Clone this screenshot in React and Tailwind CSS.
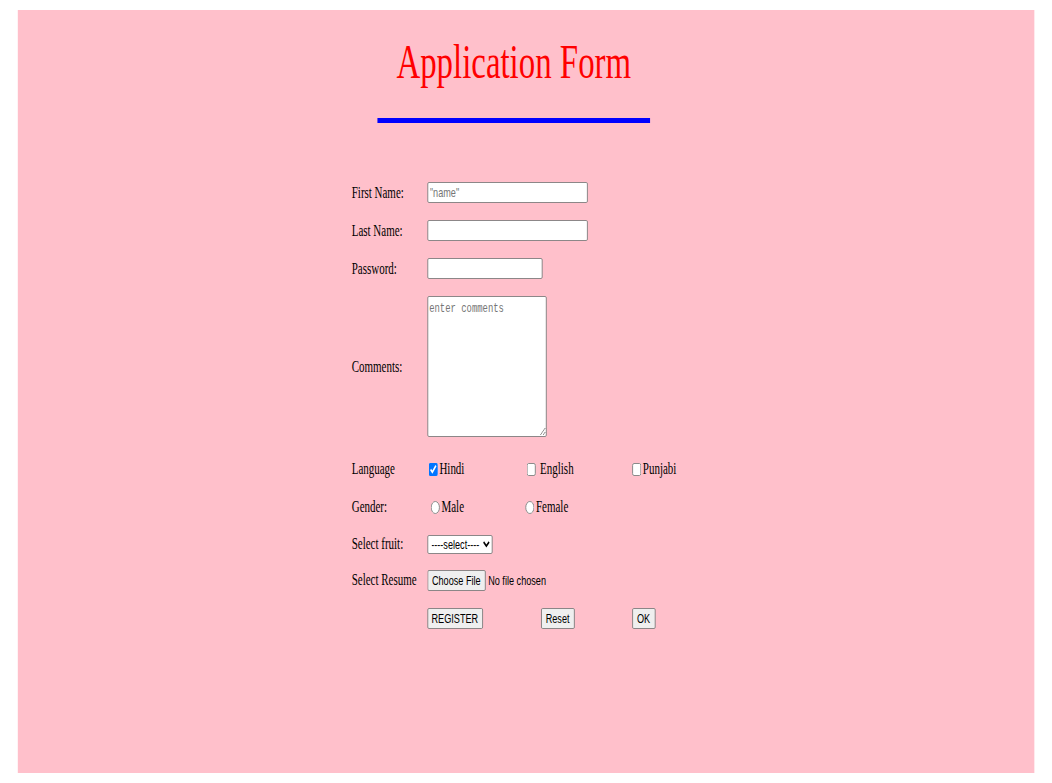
import React from "react";

const ctl = "font-['Liberation_Sans',Arial,sans-serif] text-[13.33px] text-black";

export default function App() {
  return (
    <div className="w-full h-[783px] overflow-hidden bg-white">
      <div className="w-[1536px] h-[783px] origin-top-left scale-x-[0.685] pt-[10px] font-['Liberation_Serif','Times_New_Roman',serif]">
        <div className="ml-[26px] w-[1484px] h-[763px] bg-[#ffc0cb] pt-[24px] pr-[36px] flex flex-col items-center">
          <h1 className="h-[56px] leading-[56px] text-[48px] font-normal text-[#ff0000]">Application Form</h1>
          <div className="mt-[28px] w-[398px] h-[5px] bg-[#0000ff]" />

          <form className="mt-[59px] w-[475px] flex flex-col text-[16px] text-black">
            <div className="flex items-center h-[21px]">
              <span className="w-[111px] shrink-0 pl-[1px]">First Name:</span>
              <input
                type="text"
                placeholder={'"name"'}
                className={`w-[234px] h-[21px] bg-white border border-[#767676] rounded-[2px] px-[3px] ${ctl} placeholder:text-[#757575]`}
              />
            </div>
            <div className="flex items-center h-[21px] mt-[17px]">
              <span className="w-[111px] shrink-0 pl-[1px]">Last Name:</span>
              <input
                type="text"
                className={`w-[234px] h-[21px] bg-white border border-[#767676] rounded-[2px] px-[3px] ${ctl}`}
              />
            </div>
            <div className="flex items-center h-[21px] mt-[17px]">
              <span className="w-[111px] shrink-0 pl-[1px]">Password:</span>
              <input
                type="password"
                className={`w-[168px] h-[21px] bg-white border border-[#767676] rounded-[2px] px-[3px] ${ctl}`}
              />
            </div>
            <div className="flex items-center h-[141px] mt-[17px]">
              <span className="w-[111px] shrink-0 pl-[1px]">Comments:</span>
              <textarea
                placeholder="enter comments"
                className="w-[174px] h-[141px] bg-white border border-[#767676] rounded-[2px] p-[2px] font-['Liberation_Mono','Courier_New',monospace] text-[13px] text-black placeholder:text-[#757575] resize"
              />
            </div>
            <div className="flex items-center h-[22px] mt-[21px]">
              <span className="w-[111px] shrink-0 pl-[1px]">Language</span>
              <label className="w-[143px] shrink-0 flex items-center">
                <input type="checkbox" defaultChecked className="ml-[2px] mr-[3px]" />
                Hindi
              </label>
              <label className="w-[154px] shrink-0 flex items-center">
                <input type="checkbox" className="ml-[2px] mr-[3px]" />
                {"\u00a0English"}
              </label>
              <label className="flex items-center">
                <input type="checkbox" className="ml-[2px] mr-[3px]" />
                Punjabi
              </label>
            </div>
            <div className="flex items-center h-[22px] mt-[16px]">
              <span className="w-[111px] shrink-0 pl-[1px]">Gender:</span>
              <label className="w-[138px] shrink-0 flex items-center">
                <input type="radio" name="gender" className="ml-[5px] mr-[3px]" />
                Male
              </label>
              <label className="flex items-center">
                <input type="radio" name="gender" className="ml-[5px] mr-[3px]" />
                Female
              </label>
            </div>
            <div className="flex items-center h-[22px] mt-[15px]">
              <span className="w-[111px] shrink-0 pl-[1px]">Select fruit:</span>
              <select
                className={`w-[95px] h-[19px] bg-white border border-[#767676] rounded-[2px] pl-[1px] ${ctl}`}
                defaultValue="s"
              >
                <option value="s">----select----</option>
                <option>Apple</option>
                <option>Mango</option>
              </select>
            </div>
            <div className="flex items-center h-[22px] mt-[14px]">
              <span className="w-[111px] shrink-0 pl-[1px]">Select Resume</span>
              <input
                type="file"
                className={`${ctl} file:h-[21px] file:px-[6px] file:bg-[#efefef] file:border file:border-solid file:border-[#767676] file:rounded-[2px] file:mr-[4px] file:text-black`}
              />
            </div>
            <div className="flex items-center h-[22px] mt-[16px]">
              <span className="w-[111px] shrink-0" />
              <button type="button" className={`w-[81px] h-[21px] bg-[#efefef] border border-[#767676] rounded-[2px] ${ctl}`}>
                REGISTER
              </button>
              <button type="button" className={`ml-[85px] w-[49px] h-[21px] bg-[#efefef] border border-[#767676] rounded-[2px] ${ctl}`}>
                Reset
              </button>
              <button type="button" className={`ml-[84px] w-[34px] h-[21px] bg-[#efefef] border border-[#767676] rounded-[2px] ${ctl}`}>
                OK
              </button>
            </div>
          </form>
        </div>
      </div>
    </div>
  );
}
